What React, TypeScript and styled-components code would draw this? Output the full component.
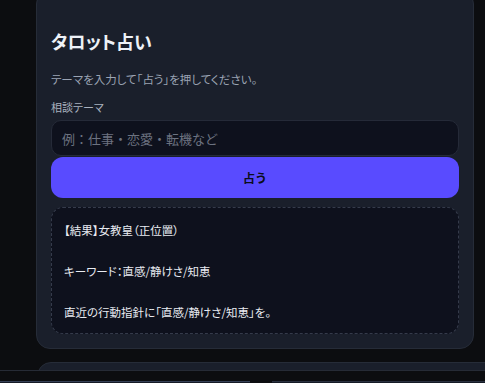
import React from "react";
import styled, { createGlobalStyle } from "styled-components";

const GlobalStyle = createGlobalStyle`
  html, body {
    margin: 0;
    padding: 0;
    background: #0c0d10;
    overflow: hidden;
  }
  body {
    font-family: "Noto Sans CJK JP", "Noto Sans", sans-serif;
  }
  * {
    box-sizing: border-box;
  }
`;

const Page = styled.div`
  padding-left: 36px;
  height: 383px;
  overflow: hidden;
`;

const Card = styled.section`
  margin-top: -10px;
  width: 438px;
  background: #1a1f2b;
  border: 1px solid #262c38;
  border-radius: 14px;
  padding: 14px;
  display: flex;
  flex-direction: column;
`;

const NextCard = styled.section`
  margin-top: 13px;
  margin-left: 1px;
  width: 470px;
  height: 60px;
  background: #1a1f2b;
  border: 1px solid #262c38;
  border-radius: 14px;
`;

const Title = styled.h1`
  margin: 24px 0 0;
  font-size: 18px;
  line-height: 25px;
  font-weight: 700;
  color: #eef2f8;
  font-feature-settings: "palt";
`;

const Lead = styled.p`
  margin: 16px 0 0;
  font-size: 11.5px;
  line-height: 18px;
  color: #9aa3b3;
  font-feature-settings: "palt";
`;

const Label = styled.label`
  margin-top: 10px;
  font-size: 11px;
  line-height: 18px;
  color: #a9b1be;
  font-feature-settings: "palt";
`;

const Input = styled.input`
  margin-top: 4px;
  height: 36px;
  width: 100%;
  background: #0e111d;
  border: 1px solid #252a38;
  border-radius: 10px;
  padding: 0 10px;
  font-family: inherit;
  font-size: 13px;
  color: #e6e9ef;
  outline: none;
  &::placeholder {
    color: #6c7280;
  }
`;

const Button = styled.button`
  margin-top: 1px;
  height: 41px;
  width: 100%;
  background: #594bff;
  border: none;
  border-radius: 12px;
  font-family: inherit;
  font-size: 12px;
  font-weight: 700;
  color: #0b0d1a;
  cursor: pointer;
`;

const Result = styled.div`
  margin-top: 9px;
  background: #0e111d;
  border: 1px dashed #353b4b;
  border-radius: 12px;
  padding: 12px 12px 10px;
  font-size: 11.5px;
  line-height: 20.5px;
  color: #e8ebf1;
  white-space: pre-wrap;
  font-feature-settings: "palt";
`;

const BottomBar = styled.div`
  position: fixed;
  left: 0;
  right: 0;
  bottom: 0;
  height: 13px;
  background: #0c0d10;
  border-top: 1px solid #262b36;
  display: flex;
  align-items: flex-end;
  gap: 22px;
`;

const BarField = styled.div<{ grow?: boolean }>`
  height: 2px;
  width: ${(p) => (p.grow ? "auto" : "250px")};
  flex: ${(p) => (p.grow ? 1 : "none")};
  background: #161b26;
  border-top: 1px solid ${(p) => (p.grow ? "#2a3140" : "#354056")};
`;

const resultText =
  "【結果】女教皇（正位置）\n\nキーワード：直感/静けさ/知恵\n\n直近の行動指針に「直感/静けさ/知恵」を。";

export default function App() {
  return (
    <>
      <GlobalStyle />
      <Page>
        <Card>
          <Title>タロット占い</Title>
          <Lead>テーマを入力して「占う」を押してください。</Lead>
          <Label htmlFor="theme">相談テーマ</Label>
          <Input id="theme" placeholder="例：仕事・恋愛・転機など" />
          <Button>占う</Button>
          <Result>{resultText}</Result>
        </Card>
        <NextCard />
      </Page>
      <BottomBar>
        <BarField />
        <BarField grow />
      </BottomBar>
    </>
  );
}
